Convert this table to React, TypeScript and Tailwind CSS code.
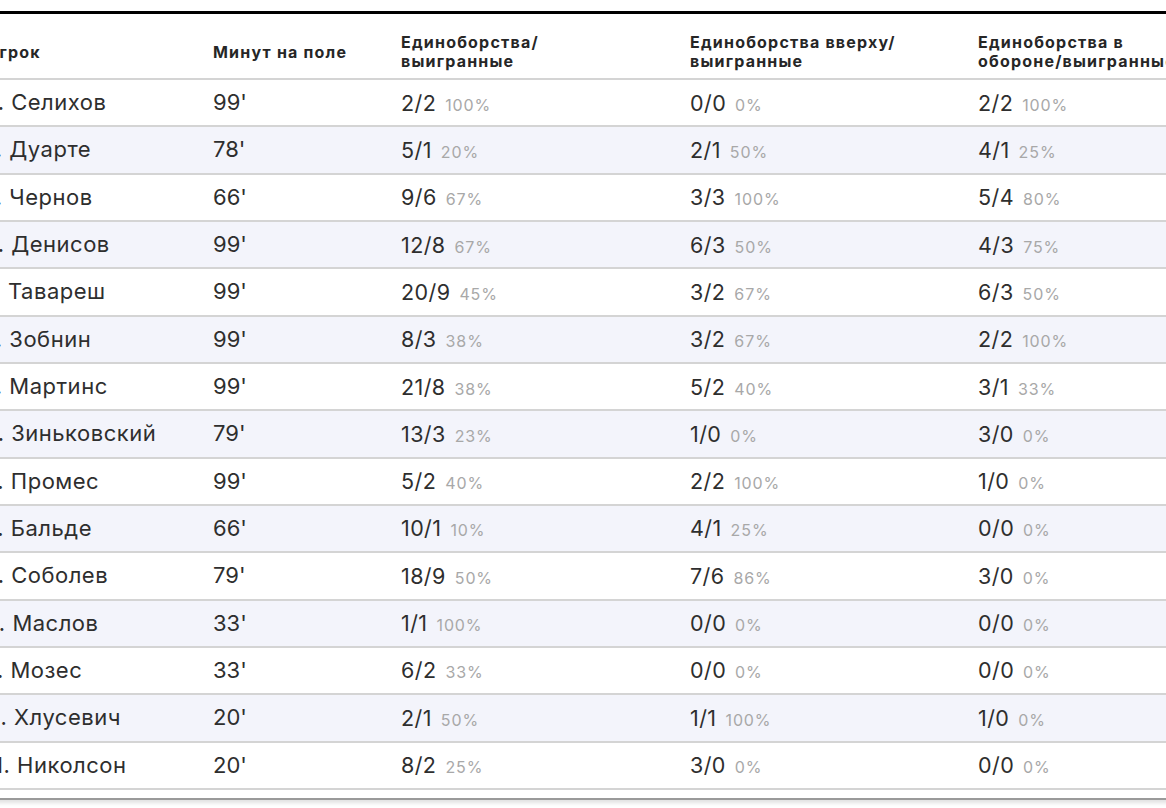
import React from "react"

type Stat = [number, number]

const players: { name: string; min: number; all: Stat; air: Stat; def: Stat }[] = [
  { name: "А. Селихов", min: 99, all: [2, 2], air: [0, 0], def: [2, 2] },
  { name: "Р. Дуарте", min: 78, all: [5, 1], air: [2, 1], def: [4, 1] },
  { name: "Р. Чернов", min: 66, all: [9, 6], air: [3, 3], def: [5, 4] },
  { name: "А. Денисов", min: 99, all: [12, 8], air: [6, 3], def: [4, 3] },
  { name: "Г. Тавареш", min: 99, all: [20, 9], air: [3, 2], def: [6, 3] },
  { name: "Р. Зобнин", min: 99, all: [8, 3], air: [3, 2], def: [2, 2] },
  { name: "Р. Мартинс", min: 99, all: [21, 8], air: [5, 2], def: [3, 1] },
  { name: "А. Зиньковский", min: 79, all: [13, 3], air: [1, 0], def: [3, 0] },
  { name: "К. Промес", min: 99, all: [5, 2], air: [2, 2], def: [1, 0] },
  { name: "К. Бальде", min: 66, all: [10, 1], air: [4, 1], def: [0, 0] },
  { name: "А. Соболев", min: 79, all: [18, 9], air: [7, 6], def: [3, 0] },
  { name: "П. Маслов", min: 33, all: [1, 1], air: [0, 0], def: [0, 0] },
  { name: "В. Мозес", min: 33, all: [6, 2], air: [0, 0], def: [0, 0] },
  { name: "Д. Хлусевич", min: 20, all: [2, 1], air: [1, 1], def: [1, 0] },
  { name: "Ш. Николсон", min: 20, all: [8, 2], air: [3, 0], def: [0, 0] },
]

const cols = "grid grid-cols-[227px_188px_289px_288px_288px]"

function pct([a, b]: Stat) {
  if (a === 0) return "0%"
  return Math.round((b / a) * 100) + "%"
}

function StatCell({ s }: { s: Stat }) {
  return (
    <div className="flex items-baseline gap-[9px] pl-4">
      <span className="text-[21.5px] tracking-[0.4px] text-[#2e2e2e]">
        {s[0]}/{s[1]}
      </span>
      <span className="text-[16px] tracking-[0.9px] text-[#a8a8a8]">{pct(s)}</span>
    </div>
  )
}

export default function App() {
  return (
    <div
      className="w-[1166px] h-[808px] overflow-hidden bg-white"
      style={{ fontFamily: "Inter, 'Liberation Sans', sans-serif" }}
    >
      <div className="h-[11px] overflow-hidden">
        <h2 className="ml-[37px] mt-[-32px] text-[30px] font-bold leading-none text-black">Игроки</h2>
      </div>
      <div className="h-[3px] bg-black" />

      <div className="ml-[-30px] w-[1280px] pb-2 border-b-2 border-[#9a9a9a] shadow-[0_3px_4px_rgba(0,0,0,0.12)]">
        <div className={`${cols} h-[66px] pt-3 items-center border-b-2 border-[#d4d4d4] text-[16px] font-bold leading-[19px] tracking-[1.2px] text-[#262626]`}>
          <div className="pl-[16px]">Игрок</div>
          <div className="pl-4">Минут на поле</div>
          <div className="pl-4">
            Единоборства/
            <br />
            выигранные
          </div>
          <div className="pl-4">
            Единоборства вверху/
            <br />
            выигранные
          </div>
          <div className="pl-4">
            Единоборства в
            <br />
            обороне/выигранные
          </div>
        </div>

        {players.map((p, i) => (
          <div
            key={p.name}
            className={`${cols} h-[47.33px] items-center border-b-2 border-[#d4d4d4] ${
              i % 2 === 1 ? "bg-[#f3f4fb]" : "bg-white"
            }`}
          >
            <div className="pl-[12px] text-[22px] tracking-[0.5px] text-[#2e2e2e] whitespace-nowrap">{p.name}</div>
            <div className="pl-4 text-[22px] text-[#2e2e2e]">{p.min}'</div>
            <StatCell s={p.all} />
            <StatCell s={p.air} />
            <StatCell s={p.def} />
          </div>
        ))}
      </div>
    </div>
  )
}
